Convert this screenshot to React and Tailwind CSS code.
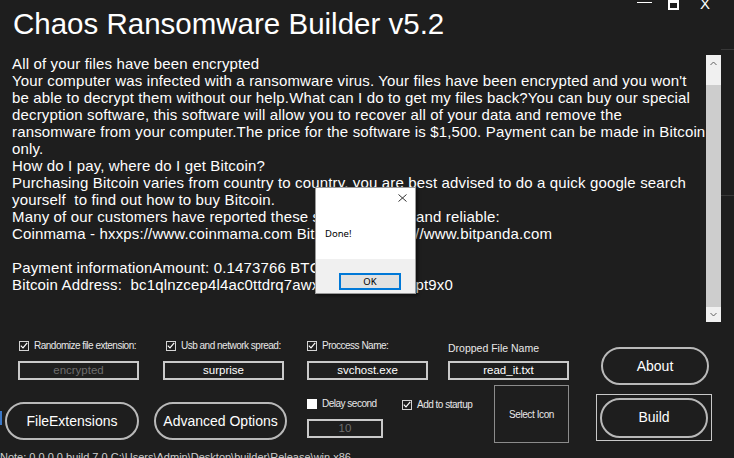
import { useState } from "react";

const note = [
  "All of your files have been encrypted",
  "Your computer was infected with a ransomware virus. Your files have been encrypted and you won't",
  "be able to decrypt them without our help.What can I do to get my files back?You can buy our special",
  "decryption software, this software will allow you to recover all of your data and remove the",
  "ransomware from your computer.The price for the software is $1,500. Payment can be made in Bitcoin",
  "only.",
  "How do I pay, where do I get Bitcoin?",
  "Purchasing Bitcoin varies from country to country, you are best advised to do a quick google search",
  "yourself  to find out how to buy Bitcoin.",
  "Many of our customers have reported these sites to be fast and reliable:",
  "Coinmama - hxxps://www.coinmama.com Bitpanda - hxxps://www.bitpanda.com",
  "",
  "Payment informationAmount: 0.1473766 BTC",
  "Bitcoin Address:  bc1qlnzcep4l4ac0ttdrq7awxev9ehu465f2vpt9x0",
];

const Chevron = ({ down }) => (
  <svg width="7" height="5" viewBox="0 0 7 5">
    <polyline
      points={down ? "0.5,1 3.5,4 6.5,1" : "0.5,4 3.5,1 6.5,4"}
      fill="none"
      stroke="#606060"
      strokeWidth="1"
    />
  </svg>
);

const CheckBox = ({ checked, label, onToggle }) => (
  <div className="flex items-center gap-[5px] h-[11px] cursor-default" onClick={onToggle}>
    {checked ? (
      <div className="w-[10px] h-[10px] border border-[#d4d4d4] bg-[#1e1e1e] flex items-center justify-center">
        <svg width="8" height="7" viewBox="0 0 8 7">
          <polyline points="0.8,3.6 3,5.8 7.2,0.8" fill="none" stroke="#ffffff" strokeWidth="1.2" />
        </svg>
      </div>
    ) : (
      <div className="w-[10px] h-[10px] bg-white" />
    )}
    <span className="text-[10px] leading-[11px] tracking-[-0.5px] text-[#e8e8e8] whitespace-nowrap">
      {label}
    </span>
  </div>
);

const TextBox = ({ value, muted, className = "" }) => (
  <div
    className={`h-[19px] border-2 border-[#c9c9c9] flex items-center justify-center text-[11.5px] leading-none ${
      muted ? "text-[#6e6e6e]" : "text-white"
    } ${className}`}
  >
    {value}
  </div>
);

const Pill = ({ children, className = "" }) => (
  <button
    type="button"
    className={`h-[38px] rounded-full border-2 border-[#b9b9b9] text-white text-[14px] flex items-center justify-center ${className}`}
  >
    {children}
  </button>
);

const App = () => {
  const [opts, setOpts] = useState({
    randomize: true,
    usb: true,
    process: true,
    delay: false,
    startup: true,
  });
  const [showDone, setShowDone] = useState(true);
  const flip = (key) => setOpts({ ...opts, [key]: !opts[key] });

  return (
    <div className="relative w-[734px] h-[458px] overflow-hidden bg-[#1e1e1e] font-['Liberation_Sans',Arial,sans-serif] select-none">
      {/* title bar */}
      <div className="h-[49px] flex justify-between">
        <h1 className="pl-[13px] pt-[9px] text-[29.5px] leading-none text-white font-normal whitespace-nowrap">
          Chaos Ransomware Builder v5.2
        </h1>
        <div className="flex items-start pr-[24px]">
          <div className="w-[15px] h-[1px] mt-[2px] bg-white" />
          <div className="w-[11px] h-[10px] ml-[16px] border-2 border-t-[3px] border-white" />
          <div className="ml-[21px] -mt-[4px] text-[15px] leading-none text-white">X</div>
        </div>
      </div>

      {/* ransom note box */}
      <div className="h-[273px] flex">
        <div className="flex-1 min-w-0 pl-[12px] pt-[6px] text-[15px] leading-[17px] text-white tracking-[0.15px]">
          {note.map((line, i) => (
            <div key={i} className="h-[17px] whitespace-pre">
              {line || "\u00a0"}
            </div>
          ))}
        </div>
        <div className="w-[15px] h-[267px] mt-[6px] flex flex-col shrink-0">
          <div className="h-[30px] bg-[#f0f0f0] flex justify-center pt-[6px]">
            <Chevron />
          </div>
          <div className="flex-1 bg-[#cdcdcd]" />
          <div className="h-[15px] bg-[#f0f0f0] flex justify-center items-center">
            <Chevron down />
          </div>
        </div>
        <div className="w-[13px] shrink-0 border-t border-[#383838]">
          <div className="mt-[145px] border-t border-[#383838]" />
        </div>
      </div>

      {/* builder options */}
      <div className="h-[128px] flex items-start">
        <div className="w-[2px] h-[14px] mt-[89px] bg-[#3b78c8]" />

        <div className="ml-[3px] w-[134px] flex flex-col">
          <div className="mt-[18px] pl-[14px]">
            <CheckBox checked={opts.randomize} label="Randomize file extension:" onToggle={() => flip("randomize")} />
          </div>
          <TextBox value="encrypted" muted className="mt-[10px] ml-[13px] w-[121px]" />
          <Pill className="mt-[22px] w-full">FileExtensions</Pill>
        </div>

        <div className="ml-[15px] w-[133px] flex flex-col">
          <div className="mt-[18px] pl-[12px]">
            <CheckBox checked={opts.usb} label="Usb and network spread:" onToggle={() => flip("usb")} />
          </div>
          <TextBox value="surprise" className="mt-[10px] ml-[9px] w-[121px]" />
          <Pill className="mt-[22px] w-full">Advanced Options</Pill>
        </div>

        <div className="ml-[20px] w-[121px] flex flex-col">
          <div className="mt-[18px]">
            <CheckBox checked={opts.process} label="Proccess Name:" onToggle={() => flip("process")} />
          </div>
          <TextBox value="svchost.exe" className="mt-[10px] w-[121px]" />
          <div className="mt-[18px] flex items-start">
            <div className="w-[95px] shrink-0">
              <CheckBox checked={opts.delay} label="Delay second" onToggle={() => flip("delay")} />
            </div>
            <div className="mt-[1px] shrink-0">
              <CheckBox checked={opts.startup} label="Add to startup" onToggle={() => flip("startup")} />
            </div>
          </div>
          <TextBox value="10" muted className="mt-[9px] w-[76px] h-[18px]" />
        </div>

        <div className="ml-[20px] w-[121px] flex flex-col">
          <div className="mt-[20px] text-[10.5px] leading-[12px] text-[#e8e8e8] whitespace-nowrap">
            Dropped File Name
          </div>
          <TextBox value="read_it.txt" className="mt-[7px] w-[121px]" />
          <button
            type="button"
            className="mt-[5px] ml-[46px] w-[75px] h-[58px] border border-[#8c8c8c] text-[10px] tracking-[-0.4px] text-[#e8e8e8] flex items-center justify-center"
          >
            Select Icon
          </button>
        </div>

        <div className="ml-[27px] w-[116px] flex flex-col">
          <Pill className="mt-[25px] ml-[5px] w-[108px]">About</Pill>
          <div className="mt-[9px] w-[116px] h-[47px] border border-[#c8c8c8] flex items-center justify-center">
            <Pill className="w-[108px] h-[40px]">Build</Pill>
          </div>
        </div>
      </div>

      {/* status line (cut off by window edge) */}
      <div className="h-[8px] overflow-hidden">
        <div className="text-[11px] leading-[14px] text-[#cfcfcf] whitespace-nowrap">
          Note: 0.0.0.0 build 7.0 C:\Users\Admin\Desktop\builder\Release\win.x86
        </div>
      </div>

      {/* message box */}
      {showDone && (
        <div className="absolute left-[315px] top-[187px] w-[101px] h-[107px] bg-white border border-[#9a9a9a] shadow-[2px_2px_3px_rgba(0,0,0,0.45)] flex flex-col font-['Noto_Sans','Liberation_Sans',sans-serif]">
          <div className="h-[71px]">
            <div className="flex justify-end pt-[6px] pr-[8px]">
              <svg width="9" height="8" viewBox="0 0 9 8" onClick={() => setShowDone(false)}>
                <path d="M0.5 0.5 L8.5 7.5 M8.5 0.5 L0.5 7.5" stroke="#333333" strokeWidth="1" />
              </svg>
            </div>
            <div className="mt-[26px] pl-[9px] text-[9.5px] leading-[12px] text-black">Done!</div>
          </div>
          <div className="flex-1 bg-[#f0f0f0] pt-[8px] pl-[23px]">
            <button
              type="button"
              className="w-[62px] h-[17px] border-2 border-[#0078d7] bg-[#e1e1e1] text-[9.5px] leading-none text-black"
              onClick={() => setShowDone(false)}
            >
              OK
            </button>
          </div>
        </div>
      )}
    </div>
  );
};

export default App;
